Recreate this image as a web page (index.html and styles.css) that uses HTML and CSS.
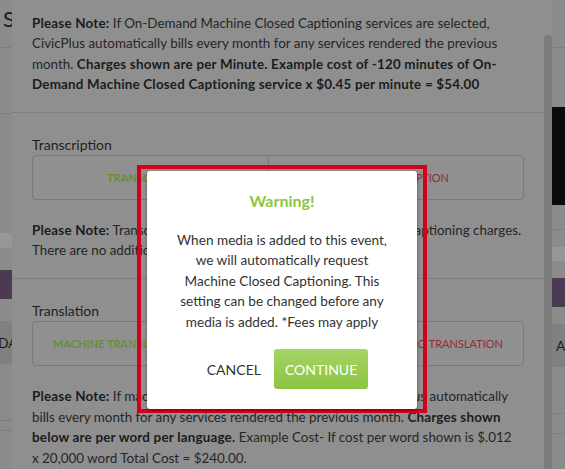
FILE: index.html
```html
<!DOCTYPE html>
<html lang="en">
<head>
<meta charset="utf-8">
<title>Warning</title>
<link rel="stylesheet" href="styles.css">
</head>
<body>
<div class="page">
  <div class="bg-col bg-left">
    <div class="bg-head"><h1 class="bg-title">Schedule Event</h1></div>
    <div class="bg-row bg-row-a"></div>
    <div class="bg-space s-120"></div>
    <div class="bg-band"></div>
    <div class="bg-space s-22"></div>
    <div class="bg-purple"></div>
    <div class="bg-space s-22"></div>
    <div class="bg-tab">DATE</div>
    <div class="bg-space s-56"></div>
    <div class="bg-line"></div>
    <div class="bg-space s-9"></div>
    <div class="bg-line"></div>
  </div>
  <div class="bg-col bg-right">
    <div class="bg-head"></div>
    <div class="bg-space s-59"></div>
    <div class="bg-video"></div>
    <div class="bg-row bg-row-b"></div>
    <div class="bg-space s-17"></div>
    <div class="bg-band bg-band-b"></div>
    <div class="bg-space s-17"></div>
    <div class="bg-purple"></div>
    <div class="bg-space s-17"></div>
    <div class="bg-tab bg-tab-b">AGENDA</div>
    <div class="bg-space s-46"></div>
    <div class="bg-line"></div>
    <div class="bg-space s-19"></div>
    <div class="bg-line"></div>
  </div>
</div>

<div class="panel">
  <div class="panel-body">
    <section class="sec sec-first">
      <p class="note"><b>Please Note:</b> If On-Demand Machine Closed Captioning services are selected, CivicPlus automatically bills every month for any services rendered the previous month. <b>Charges shown are per Minute. Example cost of -120 minutes of On-Demand Machine Closed Captioning service x $0.45 per minute = $54.00</b></p>
    </section>
    <section class="sec">
      <h3 class="sec-label">Transcription</h3>
      <div class="choice-row">
        <button class="choice choice-on">TRANSCRIPTION</button>
        <button class="choice choice-off">NO TRANSCRIPTION</button>
      </div>
      <p class="note"><b>Please Note:</b> Transcription is already included with your Closed Captioning charges. There are no additional charges for transcripts.</p>
    </section>
    <section class="sec">
      <h3 class="sec-label">Translation</h3>
      <div class="choice-row">
        <button class="choice choice-on">MACHINE TRANSLATION</button>
        <button class="choice choice-mid">LIVE HUMAN TRANSLATION</button>
        <button class="choice choice-off">NO TRANSLATION</button>
      </div>
      <p class="note"><b>Please Note:</b> If machine Translation Services are selected, CivicPlus automatically bills every month for any services rendered the previous month. <b>Charges shown below are per word per language.</b> Example Cost- If cost per word shown is $.012 x&nbsp;20,000 word Total Cost = $240.00.</p>
    </section>
  </div>
  <div class="scroll-track"><div class="scroll-thumb"></div></div>
</div>

<div class="dialog-layer">
  <div class="highlight">
    <div class="modal" role="dialog" aria-labelledby="warn-title">
      <h2 class="modal-title" id="warn-title">Warning!</h2>
      <p class="modal-text">When media is added to this event,<br>we will automatically request<br>Machine Closed Captioning. This<br>setting can be changed before any<br>media is added. *Fees may apply</p>
      <div class="modal-actions">
        <button class="btn-cancel">CANCEL</button>
        <button class="btn-continue">CONTINUE</button>
      </div>
    </div>
  </div>
</div>
</body>
</html>
```

FILE: styles.css
```css
* { box-sizing: border-box; }

html, body {
  margin: 0;
  padding: 0;
}

body {
  width: 565px;
  height: 469px;
  overflow: hidden;
  position: relative;
  background: #8b8b8b;
  font-family: Lato, "Open Sans", sans-serif;
  color: #262626;
}

/* ---------- dimmed page behind ---------- */
.page {
  display: grid;
  grid-template-columns: 552px 1fr;
  height: 469px;
}

.bg-col {
  display: flex;
  flex-direction: column;
  overflow: hidden;
}

.bg-head {
  height: 48px;
  border-bottom: 1px solid #7f7f7f;
  flex: none;
}

.bg-title {
  margin: 0;
  padding: 6px 0 0 3px;
  font-size: 22px;
  font-weight: 400;
  line-height: 26px;
  color: #1c1c1c;
  white-space: nowrap;
}

.bg-row { flex: none; border-bottom: 1px solid #808080; }
.bg-row-a { height: 66px; }
.bg-row-b { height: 25px; }

.bg-space { flex: none; }
.s-120 { height: 119px; }
.s-22 { height: 22px; }
.s-56 { height: 56px; }
.s-9 { height: 9px; }
.s-59 { height: 59px; }
.s-17 { height: 17px; }
.s-46 { height: 46px; }
.s-19 { height: 19px; }

.bg-band {
  flex: none;
  height: 15px;
  background: #979797;
}
.bg-band-b { height: 14px; }

.bg-purple {
  flex: none;
  height: 29px;
  background: #4c3a53;
}

.bg-tab {
  flex: none;
  height: 43px;
  background: #808080;
  color: #1c1c1c;
  font-size: 14px;
  line-height: 43px;
  text-indent: -2px;
  white-space: nowrap;
}
.bg-tab-b { text-indent: 4px; }

.bg-video {
  flex: none;
  height: 98px;
  background: #0b0b0b;
}

.bg-line {
  flex: none;
  height: 1px;
  background: #7e7e7e;
}

/* ---------- dimmed settings panel ---------- */
.panel {
  position: absolute;
  left: 12px;
  top: 0;
  width: 540px;
  height: 469px;
  background: #8f8f8f;
  display: flex;
  overflow: hidden;
}

.panel-body {
  flex: 1;
  margin-top: -8px;
}

.scroll-track {
  width: 8px;
  flex: none;
  display: flex;
  flex-direction: column;
}

.scroll-thumb {
  margin-top: 35px;
  flex: 1;
  background: #7b7b7b;
  border-radius: 4px 4px 0 0;
}

.sec {
  padding: 22px 20px 18px;
  border-top: 1px solid #7e7e7e;
}

.sec-first {
  border-top: none;
  padding-top: 21px;
  padding-bottom: 17px;
}

.note {
  margin: 0;
  font-size: 13.4px;
  line-height: 20.4px;
  color: #262626;
}

.note b {
  font-weight: 700;
  letter-spacing: 0.2px;
  color: #1c1c1c;
}

.sec-label {
  margin: 0;
  font-size: 14px;
  font-weight: 400;
  line-height: 20px;
  color: #1f1f1f;
}

.choice-row {
  display: flex;
  margin: 0 0 20px;
}

.choice {
  flex: 1 1 auto;
  height: 45px;
  margin: 0 0 0 -1px;
  padding: 0;
  background: #909090;
  border: 1px solid #7a7a7a;
  font-family: Lato, sans-serif;
  font-size: 11px;
  white-space: nowrap;
}

.choice:first-child {
  margin-left: 0;
  border-radius: 4px 0 0 4px;
}

.choice:last-child {
  border-radius: 0 4px 4px 0;
}

.choice-on {
  color: #678f36;
  font-weight: 700;
}

.choice-mid {
  color: #2a2a2a;
}

.choice-off {
  color: #952a34;
  font-weight: 400;
}

/* ---------- warning dialog ---------- */
.dialog-layer {
  position: absolute;
  left: 137px;
  top: 165px;
}

.highlight {
  border: 4px solid #d0021b;
  padding: 2px 6px 0;
}

.modal {
  width: 270px;
  height: 238px;
  background: #fff;
  border-radius: 3px;
  box-shadow: 0 1px 3px rgba(0, 0, 0, 0.45);
  padding: 20px 0;
  text-align: center;
}

.modal-title {
  margin: 0;
  font-size: 16px;
  line-height: 20px;
  font-weight: 700;
  color: #8dc63f;
}

.modal-text {
  margin: 19px 0 17px;
  font-size: 13.6px;
  line-height: 20.4px;
  color: #333;
}

.modal-actions {
  display: flex;
  justify-content: center;
  gap: 2px;
}

.btn-cancel,
.btn-continue {
  height: 40px;
  padding: 0 11px;
  border: none;
  font-family: Lato, sans-serif;
  font-size: 14px;
  cursor: pointer;
}

.btn-cancel {
  background: transparent;
  color: #333;
}

.btn-continue {
  background: linear-gradient(#a6d466, #8bc43f);
  color: #fff;
  border-radius: 3px;
}
```
